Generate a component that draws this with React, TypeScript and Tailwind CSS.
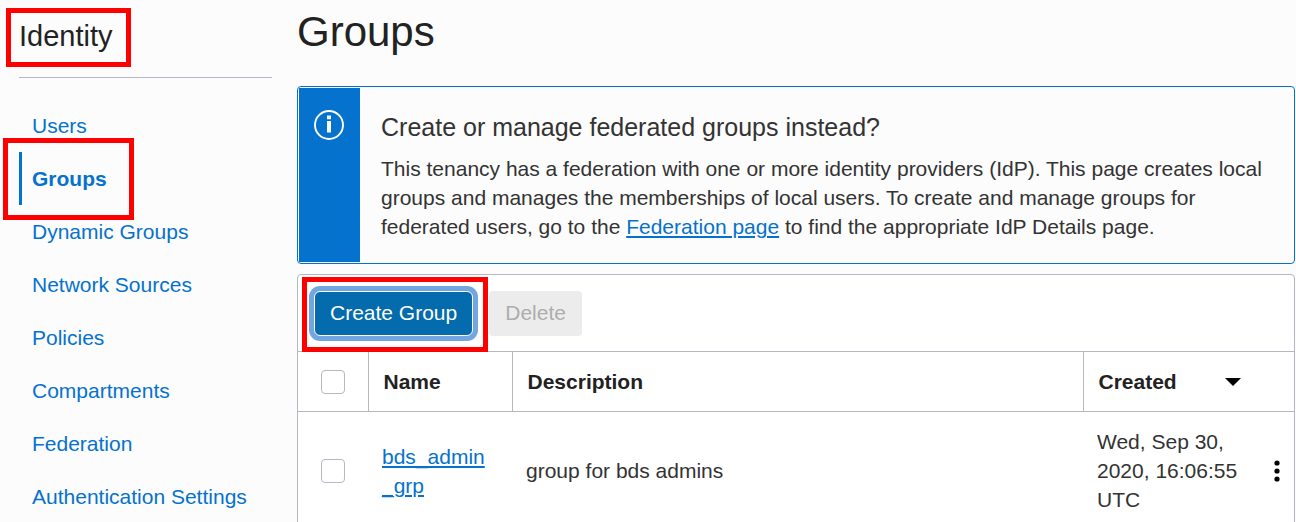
import type { ReactNode } from "react";

const navItems = [
  "Users",
  "Groups",
  "Dynamic Groups",
  "Network Sources",
  "Policies",
  "Compartments",
  "Federation",
  "Authentication Settings",
];

const current = "Groups";

function Highlight({ className }: { className: string }) {
  return (
    <span
      aria-hidden="true"
      className={`pointer-events-none absolute border-5 border-[#ff0000] ${className}`}
    />
  );
}

function Sidebar() {
  return (
    <aside className="w-[272px] shrink-0 pl-[19px]">
      <div className="relative border-b border-[#b5b8c5] pt-4 pb-5">
        <h2 className="text-[29px] leading-[41px] text-[#222]">Identity</h2>
        <Highlight className="top-2 -left-[13px] h-[59px] w-[125px]" />
      </div>
      <nav aria-label="Identity" className="pt-[21px]">
        <ul>
          {navItems.map((item) => (
            <li key={item} className="relative">
              <a
                href="#"
                aria-current={item === current ? "page" : undefined}
                className={
                  item === current
                    ? "block border-l-3 border-[#0572ce] pl-[10px] font-bold leading-[53px] text-[#0572ce]"
                    : "block border-l-3 border-transparent pl-[10px] leading-[53px] text-[#0572ce]"
                }
              >
                {item}
              </a>
              {item === current && (
                <Highlight className="-top-[14px] -left-4 z-10 h-[82px] w-[131px]" />
              )}
            </li>
          ))}
        </ul>
      </nav>
    </aside>
  );
}

function InfoIcon() {
  return (
    <svg width="30" height="30" viewBox="0 0 30 30" aria-hidden="true">
      <circle cx="15" cy="15" r="14" fill="none" stroke="#fff" strokeWidth="1.9" />
      <path d="M13 5.5h4v3.8h-4zM13 11h4v11.5h-4z" fill="#fff" />
    </svg>
  );
}

function Banner() {
  return (
    <section className="flex rounded border border-[#0572ce] p-px">
      <div className="flex w-[61px] shrink-0 bg-[#0572ce] pt-[22px] pl-[15px]">
        <InfoIcon />
      </div>
      <div className="px-[21px] pt-5 pb-[21px]">
        <h3 className="text-[25px] leading-[38px] text-[#333]">
          Create or manage federated groups instead?
        </h3>
        <p className="mt-2 leading-[29px] text-[#333]">
          This tenancy has a federation with one or more identity providers (IdP). This page
          creates local groups and manages the memberships of local users. To create and manage
          groups for federated users, go to the <TextLink>Federation page</TextLink> to find the
          appropriate IdP Details page.
        </p>
      </div>
    </section>
  );
}

function TextLink({ children }: { children: ReactNode }) {
  return (
    <a href="#" className="text-[#0572ce] underline decoration-2 underline-offset-2">
      {children}
    </a>
  );
}

function Checkbox({ label }: { label: string }) {
  return (
    <input
      type="checkbox"
      aria-label={label}
      className="mx-auto block size-6 appearance-none rounded border border-[#b5b8c5] bg-white"
    />
  );
}

function GroupsTable() {
  return (
    <table className="w-full table-fixed border-collapse text-left">
      <colgroup>
        <col className="w-[70px]" />
        <col className="w-[144px]" />
        <col />
        <col className="w-[176px]" />
        <col className="w-[35px]" />
      </colgroup>
      <thead className="border-y border-[#b5b8c0] text-[#222]">
        <tr className="h-[60px]">
          <th className="border-r border-[#b5b8c0]">
            <Checkbox label="Select all groups" />
          </th>
          <th className="border-r border-[#b5b8c0] px-[15px]">Name</th>
          <th className="border-r border-[#b5b8c0] px-[15px]">Description</th>
          <th colSpan={2} className="pl-[15px]">
            <button type="button" className="flex w-[142px] items-center justify-between">
              Created
              <svg width="16" height="8" viewBox="0 0 16 8" aria-hidden="true">
                <path d="M0 0h16L8 8z" fill="#000" />
              </svg>
            </button>
          </th>
        </tr>
      </thead>
      <tbody className="leading-[29px] text-[#333]">
        <tr className="h-[118px]">
          <td>
            <Checkbox label="Select bds_admin_grp" />
          </td>
          <td className="pl-[14px]">
            <TextLink>
              bds_admin
              <wbr />
              _grp
            </TextLink>
          </td>
          <td className="pl-[14px]">group for bds admins</td>
          <td className="pl-[14px]">Wed, Sep 30, 2020, 16:06:55 UTC</td>
          <td>
            <button type="button" aria-label="Actions" className="mx-auto block">
              <svg width="6" height="22" viewBox="0 0 6 22" aria-hidden="true">
                <circle cx="3" cy="3" r="2.6" />
                <circle cx="3" cy="11" r="2.6" />
                <circle cx="3" cy="19" r="2.6" />
              </svg>
            </button>
          </td>
        </tr>
      </tbody>
    </table>
  );
}

export default function App() {
  return (
    <div className="flex h-screen gap-[25px] overflow-hidden bg-[#fcfcfc] pr-px font-['Liberation_Sans',Arial,sans-serif] text-[21px]">
      <Sidebar />
      <main className="min-w-0 flex-1">
        <h1 className="pt-1 pb-[26px] text-[42px] leading-[56px] text-[#222]">Groups</h1>
        <Banner />
        <section className="mt-[10px] rounded-t border border-[#b5b8c0] bg-white">
          <div className="flex gap-4 px-4 pt-4 pb-[15px]">
            <div className="relative">
              <button
                type="button"
                className="block h-[45px] rounded-md border border-white bg-[#046bad] px-[15px] pb-0.5 text-white ring-5 ring-[#73a5e0]"
              >
                Create Group
              </button>
              <Highlight className="-top-[14px] -left-3 h-[75px] w-[186px]" />
            </div>
            <button
              type="button"
              disabled
              className="h-[45px] rounded bg-[#ececec] px-4 pb-0.5 text-[#adadad]"
            >
              Delete
            </button>
          </div>
          <GroupsTable />
        </section>
      </main>
    </div>
  );
}
